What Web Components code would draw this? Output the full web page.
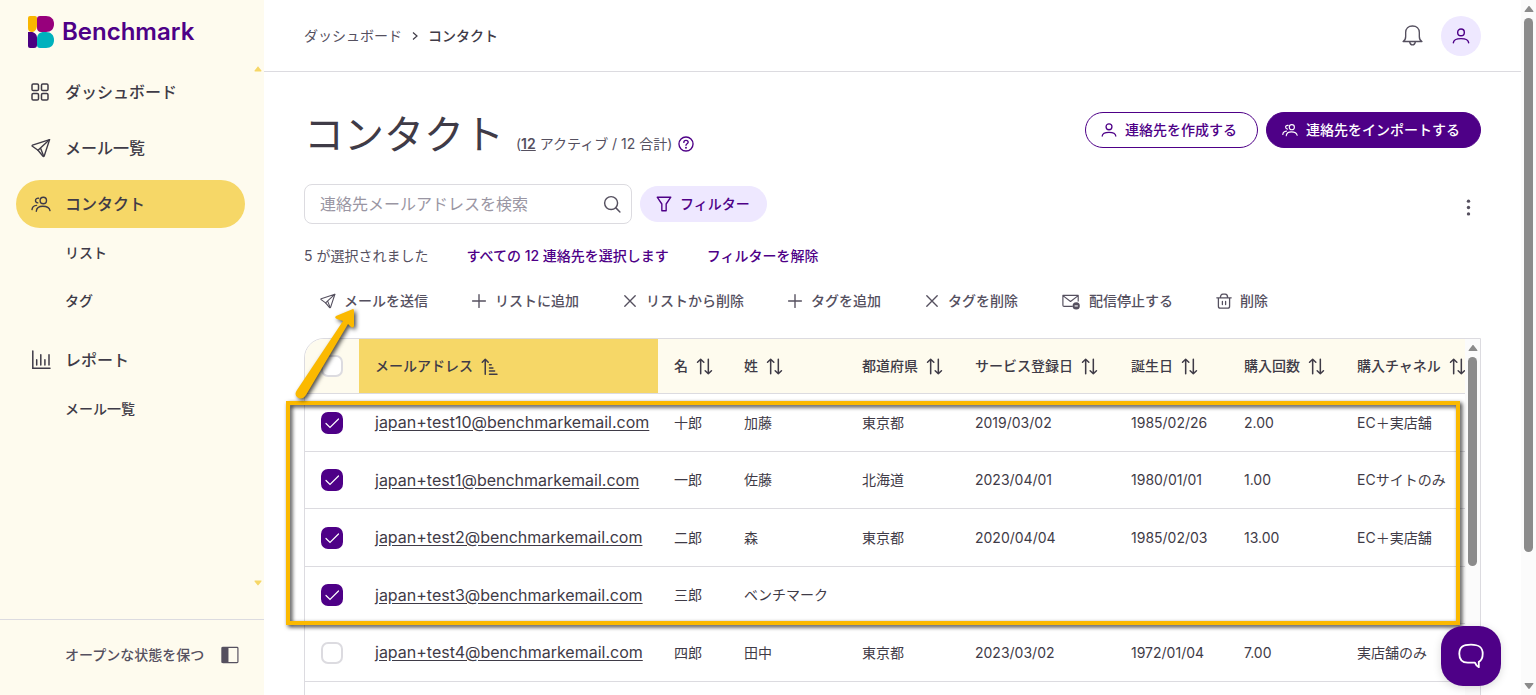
<!DOCTYPE html>
<html lang="ja">
<head>
<meta charset="utf-8">
<meta name="viewport" content="width=device-width, initial-scale=1">
<title>コンタクト | Benchmark</title>
<style>
  :root {
    --purple: #4e0087;
    --lavender: #eee8ff;
    --cream: #fefbee;
    --yellow: #f6d767;
    --ink: #3f3b47;
    --text: #55505f;
    --line: #dcdbe0;
    --amber: #fbb900;
  }
  html, body { height: 100%; margin: 0; overflow: hidden; }
  body {
    background: #fff;
    color: var(--text);
    font: 400 14px/24px Inter, "Noto Sans CJK JP", sans-serif;
  }
</style>
</head>
<body>
<bm-app></bm-app>

<script>
const ICONS = {
  grid: '<g fill="none" stroke="currentColor" stroke-width="1.5"><rect x="1" y="2" width="6.5" height="6.5" rx="1.3"/><rect x="10.5" y="2" width="6.5" height="6.5" rx="1.3"/><rect x="1" y="11.5" width="6.5" height="6.5" rx="1.3"/><rect x="10.5" y="11.5" width="6.5" height="6.5" rx="1.3"/></g>',
  send: '<g fill="none" stroke="currentColor" stroke-width="1.4" stroke-linejoin="round" stroke-linecap="round"><path d="M18.6 1.6 1.5 7.2c-.5.2-.5.8-.1 1.100l5.600 4 5 5.900c.4.4 1 .3 1.200-.2Z"/><path d="M18.400 1.800 7 12.300M9.600 10.200l3 7.800"/></g>',
  people: '<g fill="none" stroke="currentColor" stroke-width="1.4" stroke-linecap="round"><circle cx="12.300" cy="6.500" r="3.200"/><path d="M5.300 17.200c.3-3.400 2.500-4.900 6.500-4.900s6.600 1.500 7.200 4.300M7.600 4.200C5.700 4 4.500 5 4.500 6.400c0 1.300.8 2.200 2.300 2.500M1 15.600c.2-2.700 1.800-3.900 4.600-4.200"/></g>',
  person: '<g fill="none" stroke="currentColor" stroke-width="1.600" stroke-linecap="round"><circle cx="10" cy="6" r="3.700"/><path d="M1.500 17.500c.3-3.300 3-4.600 8.500-4.600s8.200 1.300 8.500 4.600"/></g>',
  chart: '<path fill="none" stroke="currentColor" stroke-width="1.500" stroke-linecap="round" d="M1.800 1v17.300H19M5.700 15V9.800M9.800 15V4.800M13.900 15V9.800M18 15V4.800"/>',
  panel: '<path fill="currentColor" d="M1.500 1h6.800v18H1.500a.8.8 0 0 1-.8-.8V1.800a.8.8 0 0 1 .8-.8Z"/><rect x="1.200" y="1.500" width="17.600" height="17" rx="1" fill="none" stroke="currentColor" stroke-width="1.300"/>',
  bell: '<g fill="none" stroke="currentColor" stroke-width="1.300" stroke-linejoin="round" stroke-linecap="round"><path d="M1 15.700h18c-1.900-1-2.500-2.400-2.500-4.800V7.200C16.500 3.200 13.900.9 10 .9S3.500 3.200 3.500 7.200v3.700c0 2.400-.6 3.800-2.500 4.800Z"/><path d="M7.300 16c.3 1.900 1.300 2.900 2.700 2.900s2.400-1 2.700-2.900"/></g>',
  search: '<g fill="none" stroke="currentColor" stroke-width="1.600" stroke-linecap="round"><circle cx="9" cy="9" r="7.200"/><path d="m14.300 14.300 4.500 4.500"/></g>',
  filter: '<path fill="none" stroke="currentColor" stroke-width="1.700" stroke-linejoin="round" d="M1.500 1.500h17L12.700 10v8.500H7.300V10Z"/>',
  help: '<g fill="none" stroke="currentColor" stroke-width="1.700" stroke-linecap="round"><circle cx="10" cy="10" r="8.800"/><path d="M7.300 8c0-1.600 1.100-2.600 2.700-2.600s2.700 1 2.700 2.400c0 2-2.700 1.900-2.700 3.900"/></g><circle cx="10" cy="14.700" r="1.200" fill="currentColor"/>',
  plus: '<path fill="none" stroke="currentColor" stroke-width="1.700" stroke-linecap="round" d="M10 2v16M2 10h16"/>',
  cross: '<path fill="none" stroke="currentColor" stroke-width="1.700" stroke-linecap="round" d="m3.500 3.500 13 13M16.500 3.500l-13 13"/>',
  mail: '<path fill="none" stroke="currentColor" stroke-width="1.300" stroke-linejoin="round" d="M12 16H2.300A1.300 1.300 0 0 1 1 14.700V3.800h17v6.700M1 4l8.500 6.500L18 4"/><circle cx="15.800" cy="15.500" r="4" fill="currentColor"/><path stroke="#fff" stroke-width="1.200" d="M14 15.500h3.600"/>',
  trash: '<path fill="none" stroke="currentColor" stroke-width="1.600" stroke-linejoin="round" stroke-linecap="round" d="M1 6h18M3 6v10.500c0 1.600.8 2.500 2.300 2.500h9.400c1.500 0 2.300-.9 2.300-2.500V6M5.500 5.500C5.500 3 6.700 1.500 8.500 1.500h3c1.800 0 3 1.500 3 4M8 10.500v4M12 10.500v4"/>',
  dots: '<g fill="currentColor"><circle cx="10" cy="2.500" r="2"/><circle cx="10" cy="10" r="2"/><circle cx="10" cy="17.500" r="2"/></g>',
  sort: '<path fill="none" stroke="currentColor" stroke-width="1.800" stroke-linecap="round" stroke-linejoin="round" d="M5.500 18.500v-17M1.800 5l3.700-3.500L9.200 5M14.500 1.500v17M10.800 15l3.700 3.500 3.700-3.500"/>',
  sorted: '<path fill="none" stroke="currentColor" stroke-width="1.800" stroke-linecap="round" stroke-linejoin="round" d="M5 19V1.500M1.500 5 5 1.500 8.500 5M10 8h2M10 11.700h4M10 15.300h6M10 19h8.800"/>',
  chat: '<path fill="none" stroke="currentColor" stroke-width="1.400" stroke-linejoin="round" d="M13 15.100H7.500C3.300 15.100 1 12.900 1 8.300 1 3.300 3.600 1.200 10 1.200s9 2.100 9 7.100c0 3.400-.9 5.300-3 6.200v4.100c-1.400-.7-2.300-1.800-3-3.500Z"/>',
  up: '<path fill="currentColor" d="M10 4c.6 0 1 .2 1.500.8l7 9c.8 1 .4 2.200-1 2.200h-15c-1.400 0-1.800-1.200-1-2.200l7-9c.5-.6.9-.8 1.500-.8Z"/>',
  down: '<path fill="currentColor" d="M10 16c.6 0 1-.2 1.500-.8l7-9c.8-1 .4-2.200-1-2.200h-15c-1.400 0-1.800 1.200-1 2.200l7 9c.5.6.9.8 1.500.8Z"/>'
};

function define(name, markup, setup) {
  const template = document.createElement('template');
  template.innerHTML = '<style>*{box-sizing:border-box}</style>' + markup;
  customElements.define(name, class extends HTMLElement {
    constructor() {
      super();
      this.attachShadow({ mode: 'open' }).append(template.content.cloneNode(true));
    }
    connectedCallback() {
      if (setup && !this.ready) { this.ready = true; setup(this, this.shadowRoot); }
    }
  });
}

define('bm-icon', `
  <style>
    :host { display: inline-block; flex: none; width: 16px; height: 16px; }
    svg { display: block; width: 100%; height: 100%; overflow: visible; }
  </style>
  <svg viewBox="0 0 20 20" aria-hidden="true"></svg>`,
  (host, root) => { root.querySelector('svg').innerHTML = ICONS[host.getAttribute('name')]; });

define('bm-logo', `
  <style>
    :host { display: block; }
    a { display: flex; align-items: center; gap: 8px; color: var(--purple); font-size: 24px; line-height: 32px; font-weight: 600; text-decoration: none; }
    svg { width: 26px; height: 32px; }
  </style>
  <a href="#">
    <svg viewBox="0 0 26 32" aria-hidden="true">
      <path fill="#f9b600" d="M2 0h5a2 2 0 0 1 2 2v7c0 4-2 7-5 7a4 4 0 0 1-4-4V2a2 2 0 0 1 2-2Z"/>
      <path fill="#97007c" d="M12 0h6c5 0 8 3 8 8s-3 8-8 8h-5c-2.600 0-4-1.700-4-4V3c0-2 1-3 3-3Z"/>
      <path fill="#4b0082" d="M0 16h3c3.500 0 6 2.500 6 6v7c0 2-1 3-3 3H2a2 2 0 0 1-2-2Z"/>
      <path fill="#00b1bd" d="M16 16h2c5 0 8 3 8 8s-3 8-8 8h-6c-2 0-3-1-3-3v-6c0-4.500 2.500-7 7-7Z"/>
    </svg>
    <span>Benchmark</span>
  </a>`);

define('bm-nav-item', `
  <style>
    :host { display: block; }
    a { display: flex; align-items: center; gap: 14px; height: 48px; padding: 0 15px; border-radius: 24px; color: var(--ink); font-size: 16px; font-weight: 500; text-decoration: none; }
    bm-icon { width: 20px; height: 20px; }
    :host([current]) a { background: var(--yellow); }
    :host([sub]) a { padding-left: 49px; font-size: 14px; }
    :host([sub]) bm-icon { display: none; }
  </style>
  <a href="#"><slot></slot></a>`,
  (host, root) => {
    const name = host.getAttribute('icon');
    if (!name) return;
    const icon = document.createElement('bm-icon');
    icon.setAttribute('name', name);
    root.querySelector('a').prepend(icon);
  });

define('bm-sidebar', `
  <style>
    :host { display: flex; flex-direction: column; background: var(--cream); }
    header { padding: 16px 28px; }
    .body { flex: 1; min-height: 0; display: flex; gap: 9px; padding: 1px 0 32px 16px; }
    nav { flex: 1; display: flex; flex-direction: column; gap: 8px; padding-top: 3px; overflow: hidden; }
    .sub { padding: 1px 0 3px; }
    .hints { display: flex; flex-direction: column; justify-content: space-between; width: 10px; color: var(--yellow); }
    .hints bm-icon { width: 8px; height: 8px; }
    footer { border-top: 1px solid var(--line); height: 76px; }
    footer button { display: flex; align-items: center; gap: 17px; width: 100%; height: 70px; padding: 0 0 0 65px; border: 0; background: none; color: var(--text); font: inherit; font-weight: 500; }
    footer bm-icon { width: 18px; height: 18px; }
  </style>
  <header><bm-logo></bm-logo></header>
  <div class="body">
    <nav>
      <bm-nav-item icon="grid">ダッシュボード</bm-nav-item>
      <bm-nav-item icon="send">メール一覧</bm-nav-item>
      <div>
        <bm-nav-item icon="people" current>コンタクト</bm-nav-item>
        <div class="sub">
          <bm-nav-item sub>リスト</bm-nav-item>
          <bm-nav-item sub>タグ</bm-nav-item>
        </div>
      </div>
      <div>
        <bm-nav-item icon="chart">レポート</bm-nav-item>
        <div class="sub"><bm-nav-item sub>メール一覧</bm-nav-item></div>
      </div>
    </nav>
    <div class="hints"><bm-icon name="up"></bm-icon><bm-icon name="down"></bm-icon></div>
  </div>
  <footer><button type="button"><span>オープンな状態を保つ</span><bm-icon name="panel"></bm-icon></button></footer>`);

define('bm-topbar', `
  <style>
    :host { display: flex; align-items: center; justify-content: space-between; height: 72px; padding: 0 40px; border-bottom: 1px solid var(--line); color: var(--ink); }
    nav { display: flex; align-items: center; gap: 10px; }
    a { color: var(--text); text-decoration: none; }
    strong { font-weight: 500; }
    svg { width: 6px; height: 8px; }
    .tools { display: flex; align-items: center; gap: 18px; }
    button { display: grid; place-items: center; padding: 0; border: 0; background: none; color: var(--text); }
    .bell bm-icon { width: 21px; height: 21px; }
    .avatar { width: 40px; height: 40px; border-radius: 50%; background: var(--lavender); color: var(--purple); }
    .avatar bm-icon { width: 18px; height: 18px; }
  </style>
  <nav aria-label="パンくず">
    <a href="#">ダッシュボード</a>
    <svg viewBox="0 0 6 8" aria-hidden="true"><path d="m1 .5 4 3.500-4 3.500" fill="none" stroke="currentColor" stroke-width="1.200"/></svg>
    <strong>コンタクト</strong>
  </nav>
  <div class="tools">
    <button class="bell" type="button" aria-label="通知"><bm-icon name="bell"></bm-icon></button>
    <button class="avatar" type="button" aria-label="アカウント"><bm-icon name="person"></bm-icon></button>
  </div>`);

define('bm-button', `
  <style>
    :host { display: block; }
    button { display: flex; align-items: center; gap: 8px; height: 36px; padding: 0 20px 0 15px; border: 1px solid var(--purple); border-radius: 18px; background: #fff; color: var(--purple); font: inherit; font-weight: 500; white-space: nowrap; }
    :host([kind=solid]) button { background: var(--purple); color: #fff; }
    :host([kind=soft]) button { background: var(--lavender); border-color: var(--lavender); padding-right: 16px; }
    :host([kind=link]) button { height: 24px; padding: 0; border: 0; background: none; }
    :host([kind=plain]) button { padding: 0 16px; border: 0; background: none; color: var(--text); height: 38px; }
  </style>
  <button type="button"><slot name="icon"></slot><slot></slot></button>`);

define('bm-scroll-rail', `
  <style>
    :host { display: flex; flex-direction: column; align-items: center; flex: none; width: 15px; background: #fbfbfb; color: #8b8b8b; }
    bm-icon { width: 10px; height: 10px; margin: 4px 0; }
    .track { flex: 1; align-self: stretch; padding: 0 3px; }
    .thumb { height: var(--thumb, 50%); border-radius: 5px; background: currentColor; }
  </style>
  <bm-icon name="up"></bm-icon><div class="track"><div class="thumb"></div></div><bm-icon name="down"></bm-icon>`);

define('bm-contact-table', `
  <style>
    :host { display: flex; position: relative; }
    .panel { flex: 1; min-width: 0; display: flex; border: 1px solid var(--line); border-radius: 20px 0 0 0; overflow: hidden; }
    .view { flex: 1; min-width: 0; overflow: hidden; }
    bm-scroll-rail { --thumb: 57%; }
    table { width: 100%; table-layout: fixed; border-collapse: separate; border-spacing: 0; }
    th, td { padding: 0 0 0 16px; border-bottom: 1px solid var(--line); text-align: left; white-space: nowrap; overflow: hidden; vertical-align: middle; }
    td { height: 58px; color: var(--ink); }
    tr:nth-child(even) td { height: 57px; }
    th { height: 55px; background: var(--cream); color: var(--ink); font-weight: 500; }
    th.sorted { background: var(--yellow); }
    th button { display: flex; align-items: center; gap: 8px; padding: 0; border: 0; background: none; color: inherit; font: inherit; }
    th bm-icon { width: 17px; height: 17px; }
    td a { color: inherit; font-size: 16px; text-decoration: underline; text-underline-offset: 2px; }
    input { appearance: none; display: block; width: 22px; height: 22px; margin: 0; border: 2px solid var(--line); border-radius: 7px; background: #fff; }
    input:checked { border-color: var(--purple); background: var(--purple) url("data:image/svg+xml,%3Csvg xmlns='http://www.w3.org/2000/svg' viewBox='0 0 18 18'%3E%3Cpath d='m3 9.500 4 4L15.500 5' fill='none' stroke='white' stroke-width='1.200' stroke-linecap='round'/%3E%3C/svg%3E") center / 18px no-repeat; }
    .frame { position: absolute; top: 63px; left: -18px; right: 21px; height: 224px; border: 4px solid var(--amber); filter: drop-shadow(2px 2px 2px rgba(0,0,0,.8)); pointer-events: none; }
    .arrow { position: absolute; top: -32px; left: -12px; width: 66px; height: 96px; filter: drop-shadow(2px 2px 2px rgba(0,0,0,.7)); pointer-events: none; }
    col.check { width: 54px; } col.mail { width: 299px; } col.first { width: 70px; } col.last { width: 118px; }
    col.mid { width: 113px; } col.date { width: 156px; }
  </style>
  <div class="panel">
    <div class="view">
      <table>
        <colgroup><col class="check"><col class="mail"><col class="first"><col class="last"><col class="mid"><col class="date"><col class="mid"><col class="mid"><col></colgroup>
        <thead><tr><th><input type="checkbox" aria-label="すべて選択"></th></tr></thead>
        <tbody></tbody>
      </table>
    </div>
    <bm-scroll-rail></bm-scroll-rail>
  </div>
  <div class="frame"></div>
  <svg class="arrow" viewBox="0 0 66 96" aria-hidden="true"><path fill="#fbb900" d="M61 3Q62 3 62 5V20Q61 23 58 20L56 18 14 89Q10 95 5 91 2 88 5 84L51 15 45 13Q42 12 44 10Z"/></svg>`,
  (host, root) => {
    const columns = ['メールアドレス', '名', '姓', '都道府県', 'サービス登録日', '誕生日', '購入回数', '購入チャネル'];
    const rows = [
      [true, 'japan+test10@benchmarkemail.com', '十郎', '加藤', '東京都', '2019/03/02', '1985/02/26', '2.00', 'EC＋実店舗'],
      [true, 'japan+test1@benchmarkemail.com', '一郎', '佐藤', '北海道', '2023/04/01', '1980/01/01', '1.00', 'ECサイトのみ'],
      [true, 'japan+test2@benchmarkemail.com', '二郎', '森', '東京都', '2020/04/04', '1985/02/03', '13.00', 'EC＋実店舗'],
      [true, 'japan+test3@benchmarkemail.com', '三郎', 'ベンチマーク', '', '', '', '', ''],
      [false, 'japan+test4@benchmarkemail.com', '四郎', '田中', '東京都', '2023/03/02', '1972/01/04', '7.00', '実店舗のみ']
    ];
    root.querySelector('thead tr').insertAdjacentHTML('beforeend', columns.map((c, i) =>
      `<th${i ? '' : ' class="sorted" aria-sort="ascending"'}><button type="button"><span>${c}</span><bm-icon name="${i ? 'sort' : 'sorted'}"></bm-icon></button></th>`).join(''));
    root.querySelector('tbody').innerHTML = rows.map(([on, mail, ...cells]) =>
      `<tr><td><input type="checkbox" aria-label="${mail}"${on ? ' checked' : ''}></td><td><a href="#">${mail}</a></td>${cells.map(c => `<td>${c}</td>`).join('')}</tr>`).join('');
  });

define('bm-contacts', `
  <style>
    :host { display: flex; flex-direction: column; padding: 40px 40px 0; min-height: 0; overflow: hidden; }
    .title, .find, .select, .actions { display: flex; flex: none; }
    .title { justify-content: space-between; align-items: flex-start; margin-bottom: 26px; }
    .name { display: flex; align-items: baseline; gap: 12px; }
    h1 { margin: 0; color: var(--ink); font-size: 40px; line-height: 46px; font-weight: 400; }
    p { display: flex; align-items: center; gap: 6px; margin: 0; }
    p a { color: inherit; font-weight: 600; }
    .help { display: grid; padding: 0; border: 0; background: none; color: var(--purple); }
    .buttons { display: flex; gap: 8px; }
    .find { align-items: center; gap: 8px; margin-bottom: 20px; }
    label { display: flex; align-items: center; width: 328px; height: 40px; padding: 0 10px 0 15px; border: 1px solid var(--line); border-radius: 8px; }
    input { flex: 1; min-width: 0; padding: 0; border: 0; outline: 0; background: none; color: var(--ink); font: inherit; font-size: 16px; }
    input::placeholder { color: #9a96a3; opacity: 1; }
    label bm-icon { width: 18px; height: 18px; }
    .more { margin: 6px 4px 0 auto; padding: 0; border: 0; background: none; color: var(--text); }
    .more bm-icon { display: block; width: 17px; height: 17px; }
    .select { gap: 38px; margin-bottom: 14px; }
    .actions { gap: 11px; margin-bottom: 18px; }
    .actions .wide { width: 20px; height: 18px; }
    bm-contact-table { flex: 1; min-height: 404px; }
  </style>
  <div class="title">
    <div class="name">
      <h1>コンタクト</h1>
      <p><span>(<a href="#">12</a> アクティブ / 12 合計)</span><button class="help" type="button" aria-label="ヘルプ"><bm-icon name="help"></bm-icon></button></p>
    </div>
    <div class="buttons">
      <bm-button><bm-icon slot="icon" name="person"></bm-icon>連絡先を作成する</bm-button>
      <bm-button kind="solid"><bm-icon slot="icon" name="people"></bm-icon>連絡先をインポートする</bm-button>
    </div>
  </div>
  <div class="find">
    <label><input type="text" placeholder="連絡先メールアドレスを検索" aria-label="連絡先メールアドレスを検索"><bm-icon name="search"></bm-icon></label>
    <bm-button kind="soft"><bm-icon slot="icon" name="filter"></bm-icon>フィルター</bm-button>
    <button class="more" type="button" aria-label="その他"><bm-icon name="dots"></bm-icon></button>
  </div>
  <div class="select">
    <span>5 が選択されました</span>
    <bm-button kind="link">すべての 12 連絡先を選択します</bm-button>
    <bm-button kind="link">フィルターを解除</bm-button>
  </div>
  <div class="actions">
    <bm-button kind="plain"><bm-icon slot="icon" name="send"></bm-icon>メールを送信</bm-button>
    <bm-button kind="plain"><bm-icon slot="icon" name="plus"></bm-icon>リストに追加</bm-button>
    <bm-button kind="plain"><bm-icon slot="icon" name="cross"></bm-icon>リストから削除</bm-button>
    <bm-button kind="plain"><bm-icon slot="icon" name="plus"></bm-icon>タグを追加</bm-button>
    <bm-button kind="plain"><bm-icon slot="icon" name="cross"></bm-icon>タグを削除</bm-button>
    <bm-button kind="plain"><bm-icon slot="icon" class="wide" name="mail"></bm-icon>配信停止する</bm-button>
    <bm-button kind="plain"><bm-icon slot="icon" name="trash"></bm-icon>削除</bm-button>
  </div>
  <bm-contact-table></bm-contact-table>`);

define('bm-chat', `
  <style>
    :host { position: fixed; right: 35px; bottom: 9px; }
    button { display: grid; place-items: center; width: 60px; height: 60px; padding: 0; border: 0; border-radius: 22px; background: var(--purple); color: #fff; box-shadow: 0 2px 8px rgba(0,0,0,.15); }
    bm-icon { width: 26px; height: 26px; }
  </style>
  <button type="button" aria-label="チャット"><bm-icon name="chat"></bm-icon></button>`);

define('bm-app', `
  <style>
    :host { display: grid; grid-template-columns: 264px minmax(0, 1fr) auto; height: 100vh; }
    main { display: flex; flex-direction: column; min-height: 0; min-width: 0; }
    bm-topbar { flex: none; }
    bm-contacts { flex: 1; }
    bm-scroll-rail { --thumb: 81%; }
  </style>
  <bm-sidebar></bm-sidebar>
  <main><bm-topbar></bm-topbar><bm-contacts></bm-contacts></main>
  <bm-scroll-rail></bm-scroll-rail>
  <bm-chat></bm-chat>`);
</script>
</body>
</html>
